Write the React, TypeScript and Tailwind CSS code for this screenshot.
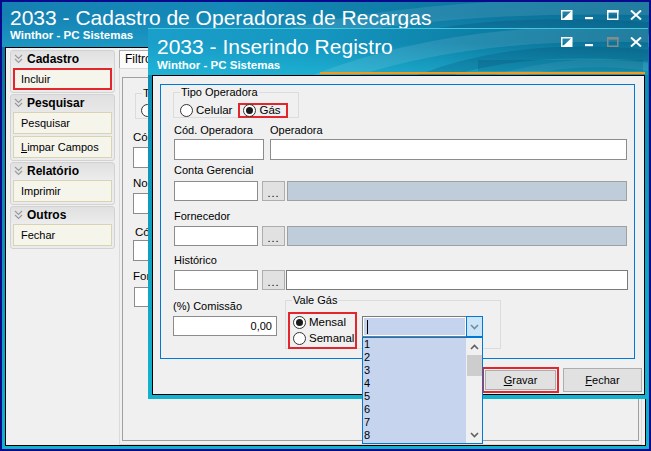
import React from 'react';

const font = "font-['Liberation_Sans',Arial,sans-serif]";

function Swoosh() {
  return (
    <svg className="absolute inset-0 w-full h-full pointer-events-none" viewBox="0 0 650 47" preserveAspectRatio="none">
      <path d="M200 60 C 320 20, 470 0, 660 6" stroke="rgba(255,255,255,0.10)" strokeWidth="16" fill="none" />
      <path d="M330 60 C 430 25, 540 18, 660 28" stroke="rgba(0,50,90,0.18)" strokeWidth="12" fill="none" />
      <path d="M420 60 C 500 35, 580 30, 660 40" stroke="rgba(255,255,255,0.08)" strokeWidth="8" fill="none" />
    </svg>
  );
}

function WinControls({ dimMax = false }: { dimMax?: boolean }) {
  return (
    <div className="flex items-start gap-[11px] relative">
      <svg width="12" height="10" viewBox="0 0 12 10">
        <rect x="0.75" y="0.75" width="10" height="8.5" fill="none" stroke="#fff" strokeWidth="1.5" />
        <path d="M11 0.5 L11 9.5 L1.5 9.5 Z" fill="#fff" />
      </svg>
      <svg width="12" height="10" viewBox="0 0 12 10">
        <rect x="1" y="7" width="8" height="2.2" fill="#fff" />
      </svg>
      <svg width="12" height="10" viewBox="0 0 12 10">
        <rect x="0.75" y="0.75" width="10" height="8.5" fill="none" stroke={dimMax ? '#8a8a8a' : '#fff'} strokeWidth="1.5" />
        <rect x="0" y="0" width="11.5" height="2.6" fill={dimMax ? '#8a8a8a' : '#fff'} />
      </svg>
      <svg width="12" height="10" viewBox="0 0 12 10">
        <path d="M1 0.5 L11 9.5 M11 0.5 L1 9.5" stroke="#fff" strokeWidth="2" />
      </svg>
    </div>
  );
}

function Radio({ checked = false, label }: { checked?: boolean; label: string }) {
  return (
    <div className="flex items-center">
      <span className="w-[13px] h-[13px] rounded-full border border-[#333] bg-white flex items-center justify-center">
        {checked && <span className="w-[7px] h-[7px] rounded-full bg-[#1a1a1a]" />}
      </span>
      <span className="ml-[3px] text-[11.5px] leading-[13px]">{label}</span>
    </div>
  );
}

function SideGroup({ title, children }: { title: string; children: React.ReactNode }) {
  return (
    <div className="rounded-[3px] border border-[#d2d2d2] bg-[linear-gradient(to_bottom,#e0e0e0,#ececec_40%)] px-[2px] pb-[2px]">
      <div className="h-[16px] flex items-center">
        <svg width="9" height="10" viewBox="0 0 9 10" className="ml-[1px]">
          <path d="M1 1 L4.5 4.5 L8 1 M1 5 L4.5 8.5 L8 5" stroke="#9a9a9a" strokeWidth="1.2" fill="none" />
        </svg>
        <span className="ml-[4px] text-[12px] leading-[14px] font-bold">{title}</span>
      </div>
      <div className="flex flex-col gap-[2px] mt-[1px]">{children}</div>
    </div>
  );
}

function SideItem({ children, marked = false }: { children: React.ReactNode; marked?: boolean }) {
  return (
    <div
      className={`h-[22px] flex items-center text-[11px] bg-[#f6f5ec] ${
        marked ? 'border-2 border-[#e3262b] pl-[6px]' : 'border border-[#d8d4b3] pl-[7px]'
      }`}
    >
      {children}
    </div>
  );
}

function Input({ w, h = 20, gray = false, dark = false, children }: { w: number; h?: number; gray?: boolean; dark?: boolean; children?: React.ReactNode }) {
  return (
    <div
      style={{ width: w, height: h }}
      className={`shrink-0 border text-[11px] flex items-center justify-end pr-[4px] ${
        gray ? 'bg-[#bfccd9] border-[#a0a0a0]' : dark ? 'bg-white border-[#7a7a7a]' : 'bg-white border-[#8c8c8c]'
      }`}
    >
      {children}
    </div>
  );
}

function Dots() {
  return (
    <div className="w-[23px] h-[20px] shrink-0 border border-[#adadad] bg-[#e1e1e1] flex items-end justify-center pb-[3px]">
      <span className="text-[11px] leading-[8px] tracking-[1px]">...</span>
    </div>
  );
}

function Chevron({ up = false, color = '#606060' }: { up?: boolean; color?: string }) {
  return (
    <svg width="9" height="6" viewBox="0 0 9 6">
      <path d={up ? 'M1 5 L4.5 1.5 L8 5' : 'M1 1 L4.5 4.5 L8 1'} stroke={color} strokeWidth="1.6" fill="none" />
    </svg>
  );
}

function SecondWindow() {
  return (
    <div className="absolute left-[148px] top-[28px] w-[500px] h-[371px] flex flex-col border-t border-[#45c6de] bg-[linear-gradient(to_bottom,#0e86ad,#12b3cf)]">
      <div className="relative h-[46px] shrink-0 flex justify-between pl-[9px] pr-[6px] bg-[linear-gradient(100deg,#1a9fca_0%,#1496c0_35%,#0d7fa6_65%,#0a6e93_100%)]">
        <div className="absolute inset-0 bg-[linear-gradient(to_top,rgba(40,205,230,0.45),rgba(40,205,230,0)_70%)]" />
        <Swoosh />
        <div className="absolute left-[330px] top-[31px] w-[165px] h-[11px] bg-[rgba(0,60,95,0.18)]" />
        <div className="absolute left-[172px] right-[3px] top-[43px] h-[2px] bg-[#f39a1a]" />
        <div className="relative pt-[6px] text-white">
          <div className="text-[21px] leading-[24px]">2033 - Inserindo Registro</div>
          <div className="text-[11.5px] leading-[13px] font-bold">Winthor - PC Sistemas</div>
        </div>
        <div className="pt-[8px]">
          <WinControls dimMax />
        </div>
      </div>
      <div className="flex-1 ml-[4px] mr-[3px] mb-[4px] border border-black bg-[#f0f0f0] flex flex-col">
        <div className="ml-[7px] mt-[8px] w-[475px] h-[275px] border border-[#0078d7] flex flex-col pl-[12px]">
          {/* Tipo Operadora */}
          <div className="relative mt-[7px] w-[126px] h-[26px] border border-[#dcdcdc]">
            <span className="absolute -top-[7px] left-[6px] px-[1px] bg-[#f0f0f0] text-[11px] leading-[13px]">Tipo Operadora</span>
            <div className="flex items-center mt-[10px] pl-[6px]">
              <Radio label="Celular" />
              <div className="ml-[6px] h-[15px] w-[50px] border-2 border-[#e3262b] flex items-center pl-[3px]">
                <Radio checked label="Gás" />
              </div>
            </div>
          </div>

          <div className="flex mt-[6px] pl-[1px] text-[11px] leading-[13px]">
            <span className="w-[96px]">Cód. Operadora</span>
            <span>Operadora</span>
          </div>
          <div className="flex mt-[2px] pl-[1px] gap-[6px]">
            <Input w={90} h={21} />
            <Input w={357} h={21} />
          </div>

          <div className="mt-[4px] pl-[1px] text-[11px] leading-[13px]">Conta Gerencial</div>
          <div className="flex mt-[4px] pl-[1px]">
            <Input w={84} />
            <div className="ml-[4px]"><Dots /></div>
            <div className="ml-[2px]"><Input w={340} gray /></div>
          </div>

          <div className="mt-[9px] pl-[1px] text-[11px] leading-[13px]">Fornecedor</div>
          <div className="flex mt-[3px] pl-[1px]">
            <Input w={84} />
            <div className="ml-[4px]"><Dots /></div>
            <div className="ml-[2px]"><Input w={340} gray /></div>
          </div>

          <div className="mt-[8px] pl-[1px] text-[11px] leading-[13px]">Histórico</div>
          <div className="flex mt-[3px] pl-[1px]">
            <Input w={84} />
            <div className="ml-[4px]"><Dots /></div>
            <div className="ml-[1px]"><Input w={342} dark /></div>
          </div>

          <div className="flex items-start mt-[10px]">
            <div className="w-[104px] flex flex-col">
              <span className="text-[11px] leading-[13px]">(%) Comissão</span>
              <div className="mt-[3px]">
                <Input w={104} h={20}>0,00</Input>
              </div>
            </div>
            <div className="relative ml-[8px] w-[216px] h-[49px] border border-[#dcdcdc] flex items-start">
              <span className="absolute -top-[7px] left-[6px] px-[1px] bg-[#f0f0f0] text-[11px] leading-[13px]">Vale Gás</span>
              <div className="ml-[2px] mt-[11px] w-[69px] h-[37px] border-2 border-[#e3262b] flex flex-col pl-[3px] pt-[2px]">
                <div className="h-[18px]"><Radio checked label="Mensal" /></div>
                <div className="h-[17px]"><Radio label="Semanal" /></div>
              </div>
              <div className="relative z-10 ml-[5px] mt-[15px] w-[121px] h-[21px] flex border border-[#7a7a7a] bg-white">
                <div className="flex-1 m-[1px] bg-[#c5d3ee] flex items-center pl-[3px]">
                  <span className="w-px h-[14px] bg-black" />
                </div>
                <div className="w-[17px] -my-px -mr-px border border-[#0078d7] bg-[#cce4f7] flex items-center justify-center">
                  <Chevron color="#7a8a9a" />
                </div>
                <div className="absolute left-[-1px] top-[20px] w-[121px] h-[107px] border border-[#0078d7] bg-white flex">
                  <div className="flex-1 bg-[#c6d4ee] flex flex-col text-[11px] leading-[13px] pl-[1px]">
                    {['1', '2', '3', '4', '5', '6', '7', '8'].map((n) => (
                      <span key={n}>{n}</span>
                    ))}
                  </div>
                  <div className="w-[16px] bg-[#f0f0f0] flex flex-col items-center">
                    <div className="h-[17px] flex items-center justify-center"><Chevron up /></div>
                    <div className="w-[15px] h-[21px] bg-[#cdcdcd]" />
                    <div className="flex-1" />
                    <div className="h-[17px] flex items-center justify-center"><Chevron /></div>
                  </div>
                </div>
              </div>
            </div>
          </div>
        </div>

        <div className="flex justify-end items-center gap-[4px] pr-[2px] mt-[8px]">
          <div className="w-[77px] h-[26px] border-2 border-[#e3262b] p-px">
            <div className="h-full border border-[#adadad] bg-[#e1e1e1] flex items-center justify-center text-[11px]">
              <span><span className="underline">G</span>ravar</span>
            </div>
          </div>
          <div className="w-[79px] h-[24px] border border-[#adadad] bg-[#e1e1e1] flex items-center justify-center text-[11px]">
            <span><span className="underline">F</span>echar</span>
          </div>
        </div>
      </div>
    </div>
  );
}

export default function App() {
  return (
    <div className={`relative w-[651px] h-[451px] overflow-hidden bg-[#08098c] p-[2px] text-black ${font}`}>
      <div className="h-full flex flex-col bg-[linear-gradient(to_bottom,#0b6c9c,#12b2cd)]">
        <div className="relative h-[45px] shrink-0 flex justify-between pl-[8px] pr-[7px] bg-[linear-gradient(100deg,#1581b3_0%,#1589b7_35%,#0e7ba4_65%,#0a6e95_100%)]">
          <div className="absolute inset-0 bg-[linear-gradient(to_top,rgba(40,190,225,0.35),rgba(40,190,225,0)_70%)]" />
          <Swoosh />
          <div className="relative pt-[4px] text-white">
            <div className="text-[21px] leading-[24px]">2033 - Cadastro de Operadoras de Recargas</div>
            <div className="-mt-[1px] text-[11.5px] leading-[13px] font-bold">Winthor - PC Sistemas</div>
          </div>
          <div className="pt-[8px]">
            <WinControls />
          </div>
        </div>

        <div className="flex-1 min-h-0 mx-[3px] mb-[3px] border border-black bg-[#f0f0f0] flex">
          {/* Side menu */}
          <div className="ml-[4px] mt-[2px] w-[105px] flex flex-col gap-[1px]">
            <SideGroup title="Cadastro">
              <SideItem marked>Incluir</SideItem>
            </SideGroup>
            <SideGroup title="Pesquisar">
              <SideItem>Pesquisar</SideItem>
              <SideItem><span><span className="underline">L</span>impar Campos</span></SideItem>
            </SideGroup>
            <SideGroup title="Relatório">
              <SideItem>Imprimir</SideItem>
            </SideGroup>
            <SideGroup title="Outros">
              <SideItem>Fechar</SideItem>
            </SideGroup>
          </div>

          {/* Tab area, mostly covered by the dialog */}
          <div className="ml-[4px] mr-[3px] flex-1 flex flex-col">
            <div className="h-[20px] pt-[2px] flex">
              <div className="h-[18px] w-[50px] border border-b-0 border-[#adadad] bg-[#fbfbfb] pl-[5px] text-[12px] leading-[17px]">Filtro</div>
            </div>
            <div className="flex-1 border border-[#dadada] px-[2px] pt-[8px] pb-[3px] flex">
              <div className="flex-1 border border-[#a0a0a0] pl-[10px] flex flex-col items-start text-[11.5px] leading-[13px] whitespace-nowrap">
                <div className="relative ml-[2px] mt-[15px] w-[40px] h-[26px] border border-[#dcdcdc]">
                  <span className="absolute -top-[7px] left-[6px] px-[1px] bg-[#f0f0f0]">Tipo</span>
                  <div className="mt-[10px] ml-[5px]">
                    <span className="block w-[13px] h-[13px] rounded-full border border-[#333] bg-white" />
                  </div>
                </div>
                <span className="mt-[12px]">Código</span>
                <div className="mt-[3px]"><Input w={60} h={21} /></div>
                <span className="mt-[9px]">Nome</span>
                <div className="mt-[3px]"><Input w={60} h={21} /></div>
                <span className="mt-[12px] ml-[2px]">Cód. Gerencial</span>
                <div className="mt-[1px]"><Input w={60} h={21} /></div>
                <span className="mt-[9px]">Fornecedor</span>
                <div className="mt-[4px] ml-[1px]"><Input w={60} h={20} /></div>
              </div>
            </div>
          </div>
        </div>
      </div>
      <SecondWindow />
    </div>
  );
}
